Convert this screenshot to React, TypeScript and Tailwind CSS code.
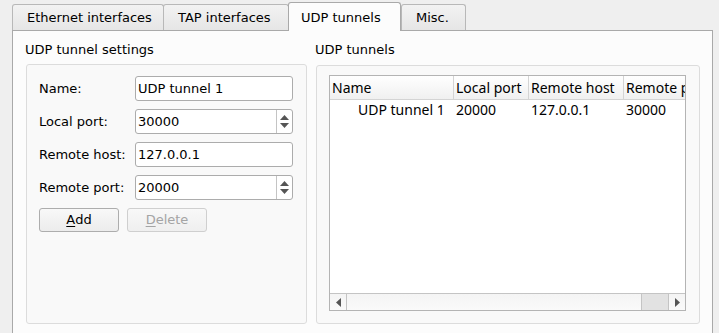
import React from "react";

const formFont = { fontFamily: '"DejaVu Sans", "Noto Sans CJK KR", sans-serif' };
const tableFont = { fontFamily: '"Noto Sans", "Open Sans", sans-serif' };

function Tab({ label, selected, w }: { label: string; selected?: boolean; w: string }) {
  if (selected) {
    return (
      <div
        className={`${w} relative z-10 -mb-px h-[29px] self-end rounded-t-[3px] border border-b-0 border-[#a9a9a9] bg-[#fcfcfc] pl-[12px] pt-[5px] text-[13px] text-black`}
      >
        {label}
      </div>
    );
  }
  return (
    <div
      className={`${w} h-[26px] self-end rounded-t-[3px] border border-b-0 border-[#b8b8b8] bg-gradient-to-b from-[#f2f2f2] to-[#e6e6e6] pl-[14px] pt-[3px] text-[13px] text-black -mr-px`}
    >
      {label}
    </div>
  );
}

function TextInput({ value }: { value: string }) {
  return (
    <div className="flex h-[25px] w-[158px] items-center rounded-[3px] border border-[#acacac] bg-white pl-[2px] text-[13px] text-black">
      {value}
    </div>
  );
}

function SpinInput({ value }: { value: string }) {
  return (
    <div className="flex h-[25px] w-[158px] items-stretch rounded-[3px] border border-[#acacac] bg-white text-[13px] text-black">
      <div className="flex flex-1 items-center pl-[2px]">{value}</div>
      <div className="flex w-[16px] flex-col items-center justify-center gap-[3px] border-l border-[#c4c4c4]">
        <svg width="9" height="5" viewBox="0 0 9 5">
          <path d="M0 5 L4.5 0 L9 5 Z" fill="#555" />
        </svg>
        <svg width="9" height="5" viewBox="0 0 9 5">
          <path d="M0 0 L4.5 5 L9 0 Z" fill="#555" />
        </svg>
      </div>
    </div>
  );
}

function Row({ label, children }: { label: string; children: React.ReactNode }) {
  return (
    <div className="flex items-center">
      <div className="w-[96px] text-[13px] text-black">{label}</div>
      {children}
    </div>
  );
}

export default function App() {
  return (
    <div className="h-[333px] w-[719px] overflow-hidden bg-[#efefef]" style={formFont}>
      <div className="flex h-[30px] items-end pl-[12px]">
        <Tab label="Ethernet interfaces" w="w-[152px]" />
        <Tab label="TAP interfaces" w="w-[126px]" />
        <Tab label="UDP tunnels" w="w-[113px]" selected />
        <Tab label="Misc." w="w-[65px]" />
      </div>
      <div className="ml-[12px] mr-[6px] h-[320px] border border-[#a9a9a9] bg-[#fcfcfc] pl-[13px] pr-[12px]">
        <div className="flex gap-[9px]">
          <div className="flex w-[281px] flex-col">
            <div className="h-[33px] pt-[9px] pl-[-1px] text-[13px] text-black -ml-px">UDP tunnel settings</div>
            <div className="h-[260px] rounded-[3px] border border-[#dcdcdc] bg-[#f9f9f9] pl-[12px] pr-[13px] pt-[11px]">
              <div className="flex flex-col gap-[8px]">
                <Row label="Name:">
                  <TextInput value="UDP tunnel 1" />
                </Row>
                <Row label="Local port:">
                  <SpinInput value="30000" />
                </Row>
                <Row label="Remote host:">
                  <TextInput value="127.0.0.1" />
                </Row>
                <Row label="Remote port:">
                  <SpinInput value="20000" />
                </Row>
              </div>
              <div className="mt-[8px] flex gap-[8px]">
                <div className="flex h-[24px] w-[80px] items-center justify-center rounded-[3px] border border-[#adadad] bg-gradient-to-b from-[#f8f8f8] to-[#ececec] text-[13px] text-black">
                  <span className="underline decoration-1 underline-offset-2">A</span>dd
                </div>
                <div className="flex h-[24px] w-[80px] items-center justify-center rounded-[3px] border border-[#cfcfcf] bg-gradient-to-b from-[#f8f8f8] to-[#efefef] text-[13px] text-[#a4a4a4]">
                  <span className="underline decoration-1 underline-offset-2">D</span>elete
                </div>
              </div>
            </div>
          </div>
          <div className="flex w-[384px] flex-col">
            <div className="h-[34px] pt-[9px] -ml-px text-[13px] text-black">UDP tunnels</div>
            <div className="h-[259px] rounded-[3px] border border-[#dcdcdc] bg-[#f9f9f9] pl-[12px] pr-[13px] pt-[9px]">
              <div className="flex h-[236px] flex-col border border-[#b4b4b4] bg-white" style={tableFont}>
                <div className="flex h-[24px] overflow-hidden border-b border-[#d4d4d4] bg-gradient-to-b from-[#ffffff] to-[#f0f0f0] text-[14px] text-black">
                  <div className="w-[124px] shrink-0 border-r border-[#d4d4d4] pl-[2px] leading-[23px]">Name</div>
                  <div className="w-[75px] shrink-0 border-r border-[#d4d4d4] pl-[2px] leading-[23px]">Local port</div>
                  <div className="w-[95px] shrink-0 border-r border-[#d4d4d4] pl-[2px] leading-[23px]">Remote host</div>
                  <div className="w-[95px] shrink-0 whitespace-nowrap pl-[2px] leading-[23px]">Remote port</div>
                </div>
                <div className="flex h-[20px] text-[14px] text-black">
                  <div className="w-[124px] shrink-0 pl-[28px] leading-[20px]">UDP tunnel 1</div>
                  <div className="w-[75px] shrink-0 pl-[2px] leading-[20px]">20000</div>
                  <div className="w-[95px] shrink-0 pl-[2px] leading-[20px]">127.0.0.1</div>
                  <div className="w-[60px] shrink-0 pl-[2px] leading-[20px]">30000</div>
                </div>
                <div className="flex-1" />
                <div className="flex h-[17px] border-t border-[#c4c4c4] bg-gradient-to-b from-[#f4f4f4] to-[#fafafa]">
                  <div className="flex w-[17px] items-center justify-center border-r border-[#c4c4c4]">
                    <svg width="5" height="9" viewBox="0 0 5 9">
                      <path d="M5 0 L0 4.5 L5 9 Z" fill="#555" />
                    </svg>
                  </div>
                  <div className="flex-1" />
                  <div className="w-[27px] border-l border-[#c4c4c4] bg-[#e2e2e2]" />
                  <div className="flex w-[17px] items-center justify-center border-l border-[#c4c4c4]">
                    <svg width="5" height="9" viewBox="0 0 5 9">
                      <path d="M0 0 L5 4.5 L0 9 Z" fill="#555" />
                    </svg>
                  </div>
                </div>
              </div>
            </div>
          </div>
        </div>
      </div>
    </div>
  );
}
